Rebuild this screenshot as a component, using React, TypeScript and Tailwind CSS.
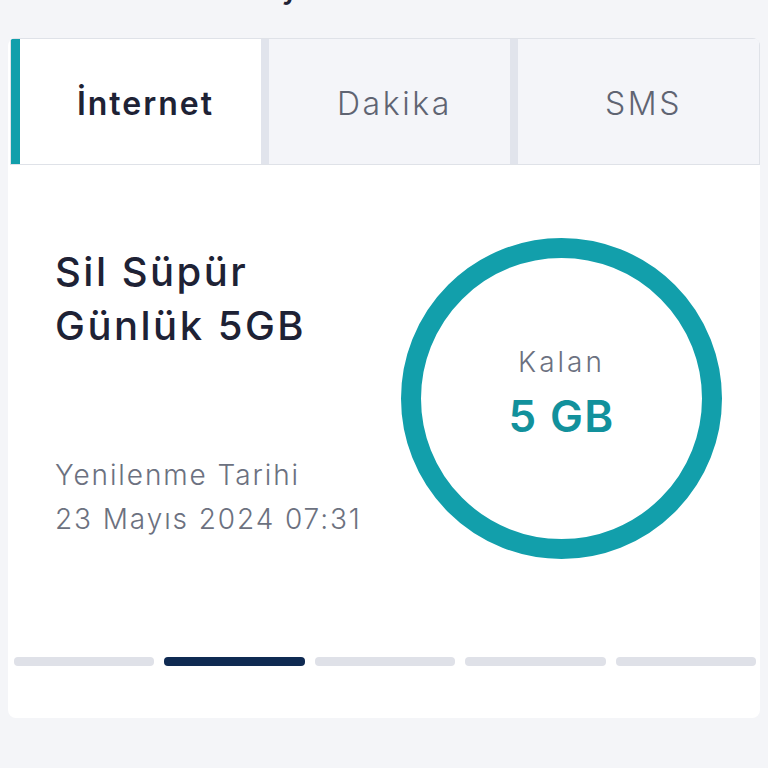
import React from 'react';

const tabs = ['İnternet', 'Dakika', 'SMS'];

export default function App() {
  const active = 0;
  const slide = 1;

  return (
    <div className="min-h-screen bg-[#f4f5f8] font-['Inter',sans-serif] overflow-hidden">
      {/* heading, mostly scrolled out of view */}
      <h2 className="-mt-[29px] h-[36px] pl-[96px] text-[28px] leading-[36px] font-semibold text-[#1e2235]">
        Kullanım Detayı
      </h2>

      <div className="mx-2 mt-[31px] bg-white rounded-lg overflow-hidden h-[680px] flex flex-col">
        {/* tabs */}
        <div className="ml-[2px] h-[127px] flex gap-2 border border-[#dfe2e8] bg-[#e1e4ec]">
          {tabs.map((t, i) => (
            <div
              key={t}
              className={
                i === active
                  ? 'flex-1 flex items-center justify-center pl-[10px] pt-[4px] bg-white border-l-[9px] border-[#129fab] text-[32px] tracking-[2px] font-semibold text-[#1e2235]'
                  : 'flex-1 flex items-center justify-center pl-[10px] pt-[4px] bg-[#f4f5f9] text-[32px] tracking-[2.6px] font-light text-[#5f6472]'
              }
            >
              {t}
            </div>
          ))}
        </div>

        {/* package info */}
        <div className="flex justify-between pl-[47px] pr-[38px] pt-[73px]">
          <div className="pt-[7px]">
            <div className="text-[40px] leading-[54px] tracking-[2.5px] font-medium text-[#1e2235]">
              Sil Süpür
              <br />
              Günlük 5GB
            </div>
            <div className="mt-[100px] text-[28px] leading-[44px] tracking-[1.9px] font-light text-[#6c7180]">
              <div>Yenilenme Tarihi</div>
              <div>23 Mayıs 2024 07:31</div>
            </div>
          </div>
          <div className="w-[321px] h-[321px] rounded-full border-[20px] border-[#129fab] flex flex-col items-center justify-center pb-[11px]">
            <div className="text-[28px] leading-[36px] tracking-[3px] font-light text-[#6c7180]">Kalan</div>
            <div className="mt-[10px] text-[44px] leading-[52px] tracking-[1.3px] font-semibold text-[#12919c]">5 GB</div>
          </div>
        </div>

        {/* slide indicator */}
        <div className="mt-[98px] pl-[6px] pr-[4px] flex gap-[10px]">
          {[0, 1, 2, 3, 4].map((i) => (
            <div
              key={i}
              className={i === slide ? 'flex-1 h-[9px] rounded-sm bg-[#0f2a52]' : 'flex-1 h-[9px] rounded-sm bg-[#dfe1e8]'}
            />
          ))}
        </div>
      </div>
    </div>
  );
}
